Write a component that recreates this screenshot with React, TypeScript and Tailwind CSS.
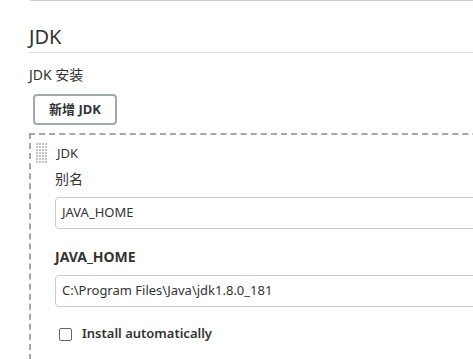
const FONT = "font-['Noto_Sans','Noto_Sans_CJK_SC',sans-serif]";

const DragHandle = () => (
  <svg width="11" height="20" viewBox="0 0 11 20" className="shrink-0">
    {Array.from({ length: 7 }).map((_, r) =>
      Array.from({ length: 4 }).map((_, c) => (
        <rect key={`${r}-${c}`} x={c * 3} y={r * 3} width="2" height="2" fill="#c4c4c4" />
      ))
    )}
  </svg>
);

const TextInput = ({ value }: { value: string }) => (
  <div className="w-[460px] h-8 border border-[#ccc] rounded-[4px] pl-[6px] flex items-center text-[13px] text-[#333]">
    {value}
  </div>
);

export default function App() {
  return (
    <div className={`w-[473px] h-[359px] overflow-hidden bg-white text-[#333] ${FONT}`}>
      <div className="pl-[29px]">
        <div className="h-px bg-[#ccc] ml-px" />
        <h2 className="mt-6 h-6 leading-6 pb-[3px] text-[20px] font-normal border-b border-[#ddd] box-content">
          JDK
        </h2>
        <div className="mt-3 leading-5 text-[14px]">JDK 安装</div>
        <button className="mt-[9px] ml-[4px] w-[84px] h-[31px] border-2 border-[#a0aab2] rounded-[4px] text-[13px] font-bold text-[#333] flex items-center justify-center">
          新增 JDK
        </button>
        <div className="mt-2 w-[520px] border-2 border-dashed border-[#9fa9b1] pt-2 pl-[5px] pb-6">
          <div className="flex items-start gap-[10px]">
            <DragHandle />
            <span className="text-[13px] leading-5">JDK</span>
          </div>
          <div className="pl-[19px]">
            <div className="mt-[6px] text-[14px] leading-5">别名</div>
            <div className="mt-2">
              <TextInput value="JAVA_HOME" />
            </div>
            <div className="mt-[18px] text-[14px] leading-5 font-bold">JAVA_HOME</div>
            <div className="mt-2">
              <TextInput value="C:\Program Files\Java\jdk1.8.0_181" />
            </div>
            <label className="mt-[17px] flex items-center gap-[10px] pl-1 h-5">
              <span className="w-[13px] h-[13px] border border-[#666] rounded-[2px] bg-white" />
              <span className="text-[13px] font-semibold">Install automatically</span>
            </label>
          </div>
        </div>
      </div>
    </div>
  );
}
